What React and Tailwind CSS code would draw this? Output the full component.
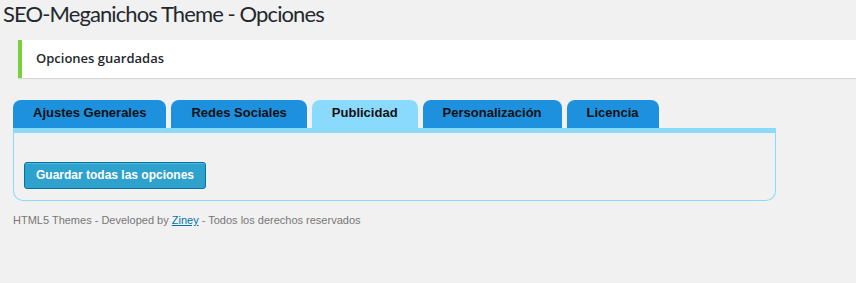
const tabs = [
  { label: 'Ajustes Generales' },
  { label: 'Redes Sociales' },
  { label: 'Publicidad', active: true },
  { label: 'Personalización' },
  { label: 'Licencia' },
]

export default function App() {
  return (
    <div className="min-h-screen bg-[#f1f1f1] font-['Liberation_Sans',Arial,sans-serif]">

      {/* Title */}
      <h1 className="h-[40px] pl-[3px] font-['Lato',sans-serif] text-[22px] leading-[27px] tracking-[-0.9px] font-normal text-[#23282d]">
        SEO-Meganichos Theme - Opciones
      </h1>

      {/* Notice */}
      <div className="ml-[18px] h-[38px] flex items-center border-l-4 border-[#7ad03a] bg-white pl-[14px] shadow-[0_1px_1px_0_rgba(0,0,0,0.1)]">
        <p className="font-['Open_Sans',sans-serif] text-[13px] font-semibold text-[#23282d]">
          Opciones guardadas
        </p>
      </div>

      {/* Tabs */}
      <div className="mt-[22px] ml-[13px] flex gap-[5px]">
        {tabs.map((t) => (
          <div
            key={t.label}
            className={
              'h-[28px] rounded-t-[8px] px-[20px] text-[13px] leading-[26px] font-bold text-[#111] ' +
              (t.active ? 'bg-[#8adafd]' : 'bg-[#1d90de]')
            }
          >
            {t.label}
          </div>
        ))}
      </div>

      {/* Panel */}
      <div className="ml-[13px] w-[763px] rounded-b-[10px] border border-t-[5px] border-[#8adafd] pt-[29px] pb-[11px] pl-[10px]">
        <button className="h-[27px] rounded-[3px] border border-[#0074a2] bg-[#2ea2cc] px-[11px] text-[12px] leading-[25px] font-bold text-white shadow-[inset_0_1px_0_rgba(120,200,230,0.5)]">
          Guardar todas las opciones
        </button>
      </div>

      {/* Footer */}
      <p className="mt-[11px] ml-[13px] text-[11px] leading-[16px] text-[#777]">
        HTML5 Themes - Developed by{' '}
        <a href="#" className="text-[#0073aa] underline">Ziney</a>
        {' '}- Todos los derechos reservados
      </p>

    </div>
  )
}
